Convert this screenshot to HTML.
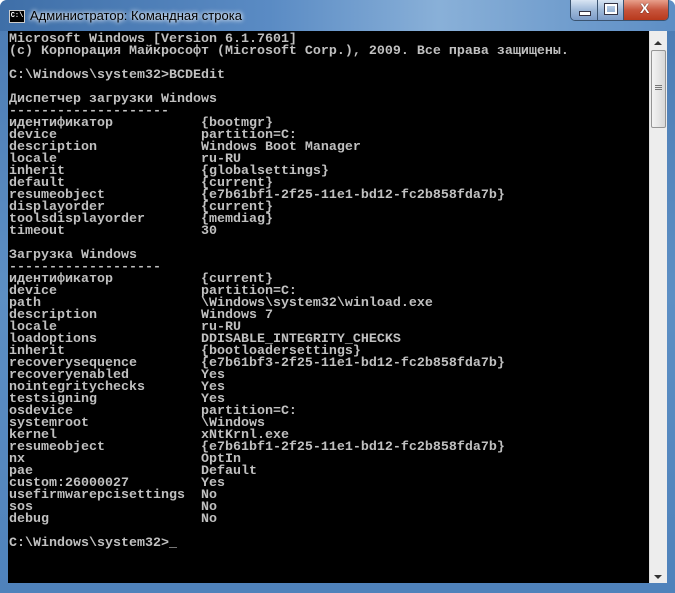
<!DOCTYPE html>
<html><head><meta charset="utf-8"><style>
html,body{margin:0;padding:0;width:675px;height:593px;overflow:hidden;background:#fff}
.win{position:absolute;left:0;top:0;width:675px;height:593px;background:linear-gradient(180deg,#6f9bc9 0%,#4d7db5 5%,#5d8fc4 50%,#4f82bb 100%);border-radius:7px 7px 0 0;}
.win:before{content:"";position:absolute;left:0;top:0;right:0;height:31px;background:linear-gradient(90deg,#3f6fa8 0%,#5a8bc4 40%,#89b0d8 65%,#5d8ec5 100%);border-radius:7px 7px 0 0}
.title{position:absolute;left:30px;top:8px;font:13px "Liberation Sans","Noto Sans CJK SC",sans-serif;color:#000;text-shadow:0 0 6px #fff,0 0 4px #fff}
.ico{position:absolute;left:9px;top:10px;width:14px;height:11px;background:#000;border:1px solid #ccc;color:#fff;font:bold 7px "Liberation Mono",monospace;line-height:11px;text-align:center}
.btns{position:absolute;right:6px;top:0;height:20px;display:flex;border:1px solid #3a5370;border-top:none;border-radius:0 0 5px 5px;overflow:hidden}
.btns div{height:20px;background:linear-gradient(#d9e5f3,#9fb9d9 50%,#7c9cc8);border-right:1px solid #3a5370;position:relative}
.bx{background:linear-gradient(#e8a08c,#c7543c 50%,#b8391c)!important;border-right:none!important}
.con{position:absolute;left:8px;top:31px;width:641px;height:552px;background:#000}
pre{margin:0;position:absolute;left:9px;top:34px;font:bold 13.33px/12px "Liberation Mono","DejaVu Sans Mono",monospace;color:#c0c0c0;letter-spacing:0}
.sb{position:absolute;left:649px;top:31px;width:17px;height:552px;background:#ededed;border-left:1px solid #ddd}
.th{position:absolute;left:651px;top:50px;width:13px;height:76px;border:1px solid #959595;border-radius:2px;background:linear-gradient(90deg,#f3f3f3,#d8d8d8)}
</style></head><body>
<div class="win"></div>
<div class="ico">C:\</div>
<div class="title">Администратор: Командная строка</div>
<div class="btns"><div style="width:26px"><span style="position:absolute;left:8px;top:11px;width:10px;height:3px;background:#fff;border:1px solid #334"></span></div><div style="width:25px"><span style="position:absolute;left:7px;top:4px;width:8px;height:6px;border:2px solid #fff;outline:1px solid #334"></span></div><div class="bx" style="width:44px"><span style="position:absolute;left:16px;top:0;color:#fff;font:bold 14px 'Liberation Sans',sans-serif;text-shadow:0 0 1px #000">X</span></div></div>
<div class="con"></div>
<div class="sb"></div>
<div style="position:absolute;left:654px;top:41px;width:0;height:0;border:4px solid transparent;border-bottom-color:#333;border-top:0"></div>
<div class="th"><div style="position:absolute;left:3px;top:34px;width:7px;height:1px;background:#777;box-shadow:0 2px #777,0 4px #777"></div></div>
<div style="position:absolute;left:654px;top:575px;width:0;height:0;border:4px solid transparent;border-top-color:#333;border-bottom:0"></div>
<pre>Microsoft Windows [Version 6.1.7601]
(c) Корпорация Майкрософт (Microsoft Corp.), 2009. Все права защищены.

C:\Windows\system32&gt;BCDEdit

Диспетчер загрузки Windows
--------------------
идентификатор           {bootmgr}
device                  partition=C:
description             Windows Boot Manager
locale                  ru-RU
inherit                 {globalsettings}
default                 {current}
resumeobject            {e7b61bf1-2f25-11e1-bd12-fc2b858fda7b}
displayorder            {current}
toolsdisplayorder       {memdiag}
timeout                 30

Загрузка Windows
-------------------
идентификатор           {current}
device                  partition=C:
path                    \Windows\system32\winload.exe
description             Windows 7
locale                  ru-RU
loadoptions             DDISABLE_INTEGRITY_CHECKS
inherit                 {bootloadersettings}
recoverysequence        {e7b61bf3-2f25-11e1-bd12-fc2b858fda7b}
recoveryenabled         Yes
nointegritychecks       Yes
testsigning             Yes
osdevice                partition=C:
systemroot              \Windows
kernel                  xNtKrnl.exe
resumeobject            {e7b61bf1-2f25-11e1-bd12-fc2b858fda7b}
nx                      OptIn
pae                     Default
custom:26000027         Yes
usefirmwarepcisettings  No
sos                     No
debug                   No

C:\Windows\system32&gt;_</pre>
</body></html>
